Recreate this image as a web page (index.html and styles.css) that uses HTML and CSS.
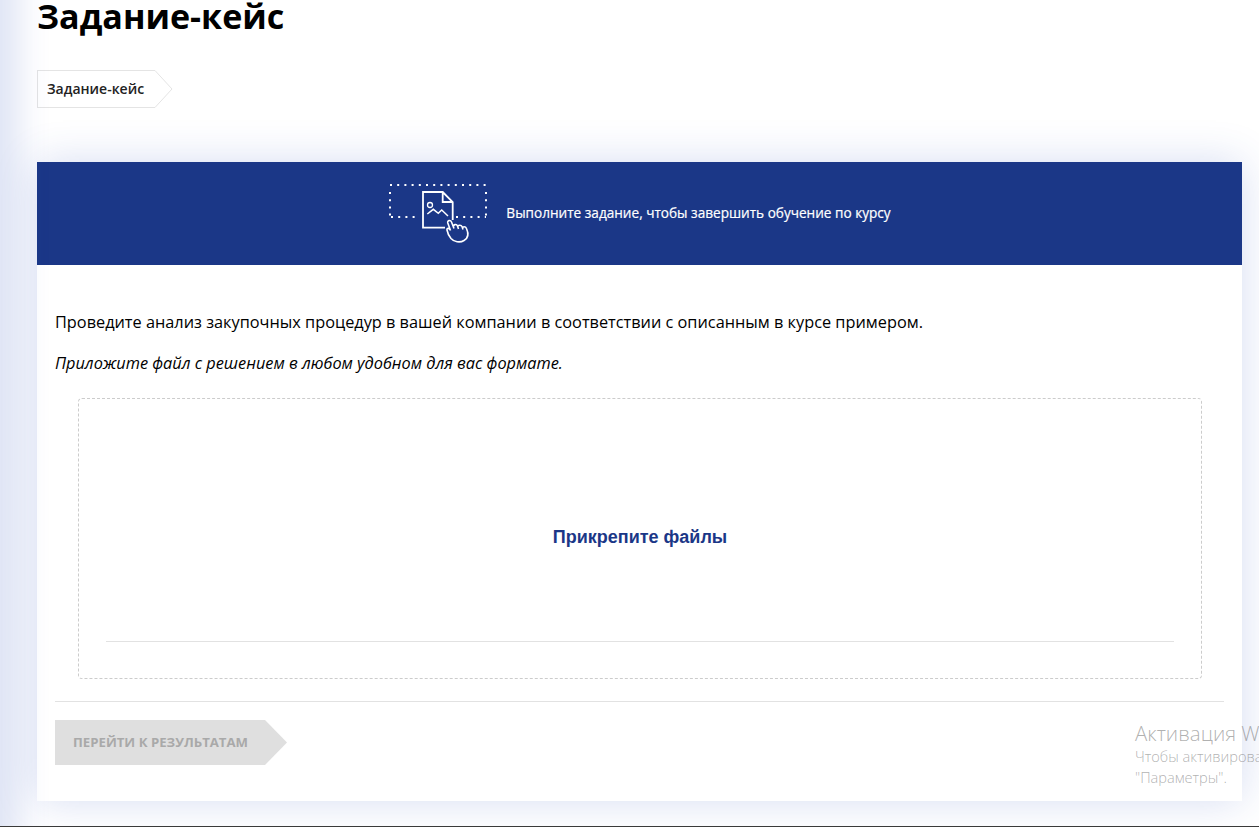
FILE: index.html
```html
<!DOCTYPE html>
<html>
<head>
    <meta charset="utf-8">
    <link rel="stylesheet" href="styles.css">
</head>
<body>
    <div class="sidebar-edge"></div>
    <main class="page">
        <h1 class="page-title">Задание-кейс</h1>
        <div class="crumbs">
            <div class="crumb">
                <span class="crumb-label">Задание-кейс</span>
                <svg class="crumb-tip" width="19" height="38" viewBox="0 0 19 38">
                    <path d="M0 .5H1L18 19 1 37.5H0" fill="#fff" stroke="#e4e4e4"/>
                </svg>
            </div>
        </div>
        <section class="card">
            <div class="banner">
                <svg class="banner-icon" width="100" height="60" viewBox="0 0 100 60" fill="none" stroke="#fff">
                    <path d="M2 1H98M2 8V33M98 8V33M3 33H31M68 33H98" stroke-width="2" stroke-dasharray="2 5.200"/>
                    <path d="M57 43.700H35V8H54.700L64.700 18V36M54.700 8V18H64.700" stroke-width="1.800"/>
                    <circle cx="42" cy="21" r="2.500" stroke-width="1.300"/>
                    <path d="M39.300 30L45.300 25.300 50.300 29.300 53.700 26 60 32" stroke-width="1.500"/>
                    <path d="M62.500 46.500L59.800 39C59 36.500 62.500 35.500 63.500 38L66 44.500M65.500 43C65 40.500 68.500 39.500 69.500 42L70.500 45M70 43C69.500 41 73 40.500 74 42.500L75 45.500M74.500 44C74.500 42.500 77.500 42 78.500 44.500 80.500 49 80.500 54 76 56.500 72 59 66 58 63 54.500 61 52 59.500 49 59 46 58.500 44 61.500 43.500 62.500 46.500" fill="#1b3787" stroke-width="1.600"/>
                </svg>
                <span class="banner-text">Выполните задание, чтобы завершить обучение по курсу</span>
            </div>
            <div class="card-body">
                <p class="task">Проведите анализ закупочных процедур в вашей компании в соответствии с описанным в курсе примером.</p>
                <p class="task task-note">Приложите файл с решением в любом удобном для вас формате.</p>
                <div class="dropzone">
                    <div class="dropzone-label">Прикрепите файлы</div>
                    <div class="dropzone-line"></div>
                </div>
                <div class="card-footer">
                    <div class="next-btn">
                        <span class="next-label">ПЕРЕЙТИ К РЕЗУЛЬТАТАМ</span>
                        <svg width="22" height="45" viewBox="0 0 22 45">
                            <path d="M0 0L22 22.500 0 45Z" fill="#dfdfdf"/>
                        </svg>
                    </div>
                </div>
            </div>
        </section>
    </main>
    <div class="watermark">
        <div class="watermark-title">Активация Windows</div>
        <div class="watermark-text">Чтобы активировать Windows, перейдите в раздел</div>
        <div class="watermark-text">"Параметры".</div>
    </div>
    <div class="taskbar-line"></div>
</body>
</html>
```

FILE: styles.css
```css
html, body {
    height: 100%;
}

body {
    margin: 0;
    background-color: #ffffff;
    color: #000000;
    font-family: "Open Sans", Arial, sans-serif;
    overflow: hidden;
    position: relative;
}

.sidebar-edge {
    position: absolute;
    left: -10px;
    top: -40px;
    bottom: -40px;
    width: 10px;
    box-shadow: 0 0 36px 14px rgba(50, 85, 190, 0.2);
}

.page {
    padding: 0 17px 0 37px;
}

.page-title {
    margin: 0;
    font-size: 34.1px;
    line-height: 32px;
    padding-bottom: 2px;
    font-weight: 700;
}

.crumbs {
    display: flex;
    padding-top: 36px;
    height: 38px;
}

.crumb {
    display: flex;
    height: 38px;
}

.crumb-label {
    display: flex;
    align-items: center;
    padding: 0 10px 2px 9px;
    background-color: #fff;
    border: 1px solid #e4e4e4;
    border-right: none;
    font-size: 14px;
    font-weight: 600;
    color: #222222;
}

.card {
    margin-top: 54px;
    height: 639px;
    background-color: #fff;
    box-shadow: 0 0 40px rgba(50, 85, 190, 0.2);
}

.banner {
    display: flex;
    justify-content: center;
    align-items: center;
    gap: 18px;
    height: 103px;
    background-color: #1b3787;
}

.banner-icon {
    flex-shrink: 0;
}

.banner-text {
    padding-bottom: 2px;
    color: #ffffff;
    font-size: 13.6px;
    -webkit-text-stroke: 0.2px #ffffff;
}

.card-body {
    padding: 0 18px;
}

.task {
    margin: 0;
    padding-top: 47px;
    font-size: 16.31px;
    line-height: 20px;
}

.task-note {
    padding-top: 21px;
    font-style: italic;
}

.dropzone {
    margin: 25px 22px 0 23px;
    height: 279px;
    border: 1px dashed #cccccc;
    border-radius: 4px;
    padding: 0 27px;
    display: flex;
    flex-direction: column;
}

.dropzone-label {
    height: 242px;
    display: flex;
    align-items: center;
    justify-content: center;
    padding-top: 34px;
    box-sizing: border-box;
    color: #1b3787;
    font-family: "Liberation Sans", Arial, sans-serif;
    font-size: 18px;
    font-weight: 700;
}

.dropzone-line {
    border-top: 1px solid #e2e2e2;
}

.card-footer {
    margin-top: 22px;
    padding-top: 18px;
    border-top: 1px solid #e2e2e2;
}

.next-btn {
    display: flex;
    height: 45px;
}

.next-label {
    display: flex;
    align-items: center;
    width: 192px;
    padding: 0 0 2px 18px;
    background-color: #dfdfdf;
    color: #a9a9a9;
    font-size: 13.2px;
    font-weight: 700;
}

.watermark {
    position: absolute;
    left: 1135px;
    top: 720px;
    white-space: nowrap;
    color: rgba(110, 110, 110, 0.55);
    font-family: "Open Sans", Arial, sans-serif;
    font-weight: 300;
}

.watermark-title {
    font-size: 20.5px;
    line-height: 26px;
}

.watermark-text {
    font-size: 14.6px;
    line-height: 21px;
}

.taskbar-line {
    position: absolute;
    left: 0;
    right: 0;
    bottom: 0;
    height: 1px;
    background-color: #3a3a3a;
}
```
